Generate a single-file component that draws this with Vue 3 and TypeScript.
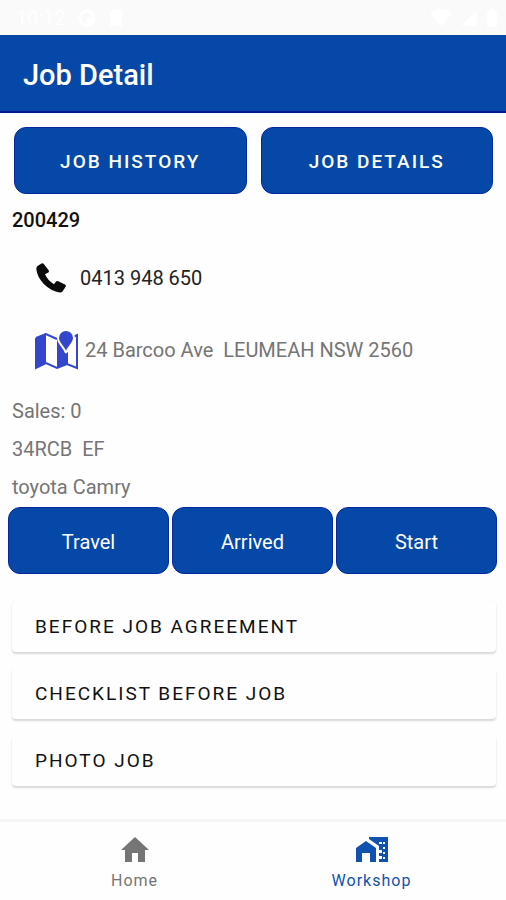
<script setup lang="ts">
import { ref } from 'vue'

interface Tab {
  id: string
  label: string
}

const topActions: string[] = ['JOB HISTORY', 'JOB DETAILS']
const stages: string[] = ['Travel', 'Arrived', 'Start']
const sections: string[] = ['BEFORE JOB AGREEMENT', 'CHECKLIST BEFORE JOB', 'PHOTO JOB']
const details: string[] = ['Sales: 0', '34RCB  EF', 'toyota Camry']
const tabs: Tab[] = [
  { id: 'home', label: 'Home' },
  { id: 'workshop', label: 'Workshop' },
]
const activeTab = ref('workshop')
</script>

<template>
  <div class="screen">
    <div class="status">
      <div class="status-group">
        <span>10:12</span>
        <svg width="18" height="18" viewBox="0 0 18 18" aria-hidden="true"><circle cx="9" cy="9" r="7" fill="none" stroke="#fff" stroke-width="3" /><path d="M9 9h7v6H9z" fill="#fff" /></svg>
        <svg width="16" height="18" viewBox="0 0 16 18" aria-hidden="true"><path d="M5 1h9v16H2V5z" fill="#fff" /></svg>
      </div>
      <div class="status-group status-right">
        <svg width="22" height="18" viewBox="0 0 22 18" aria-hidden="true"><path d="M0 4Q11-4 22 4L11 17z" fill="#fff" /></svg>
        <svg width="18" height="18" viewBox="0 0 18 18" aria-hidden="true"><path d="M17 1v16H1z" fill="#fff" /></svg>
        <svg width="12" height="18" viewBox="0 0 12 18" aria-hidden="true"><path d="M4 0h4v2h3v16H1V2h3z" fill="#fff" /></svg>
      </div>
    </div>
    <header class="app-bar"><h1>Job Detail</h1></header>

    <main class="content">
      <div class="top-actions">
        <button v-for="action in topActions" :key="action" type="button" class="filled spaced">{{ action }}</button>
      </div>

      <h2 class="job-number">200429</h2>
      <a class="contact phone" href="tel:0413948650">
        <svg class="phone-icon" viewBox="0 0 30 30" aria-hidden="true">
          <path d="M1.500 3 5.500.500Q7-.4 8 1.200L12.600 7.200Q13.500 8.600 12.300 9.500L9 11.200Q11.500 17 18 21.300L20 18.500Q21 17.500 22.300 18.200L29 21.600Q30.400 22.500 29.600 23.800L26.500 28.500Q25.500 29.800 23.800 29.500 15.500 28.500 7.800 21 1.200 14 .4 6.500.1 4.200 1.500 3z" />
        </svg>
        <span>0413 948 650</span>
      </a>
      <a class="contact address" href="#map">
        <svg class="map-icon" viewBox="0 0 44 40" aria-hidden="true">
          <path class="map-fill" d="M1 8 11 3v30L1 38zM22 8l10 4v22l-10 4z" />
          <path class="map-line" d="M1 8 11 4l11 5M38 7l4-2v29M1 8v30l10-5 11 5 10-4 10 4V5M32 22v12" />
          <path class="pin" d="M31 23C29.500 17 23 14 23 8a8 8 0 0 1 16 0C39 14 32.500 17 31 23z" />
        </svg>
        <span>24 Barcoo Ave&nbsp; LEUMEAH NSW 2560</span>
      </a>
      <p v-for="line in details" :key="line" class="detail">{{ line }}</p>

      <div class="stages">
        <button v-for="stage in stages" :key="stage" type="button" class="filled">{{ stage }}</button>
      </div>

      <div class="sections">
        <button v-for="section in sections" :key="section" type="button" class="section">{{ section }}</button>
      </div>
    </main>

    <nav class="tabs">
      <button
        v-for="tab in tabs"
        :key="tab.id"
        type="button"
        class="tab"
        :class="{ active: tab.id === activeTab }"
        @click="activeTab = tab.id"
      >
        <svg v-if="tab.id === 'home'" class="tab-icon" viewBox="0 0 34 34" aria-hidden="true">
          <path d="M14 29v-9h6v9h7V17h4L17 4 3 17h4v12z" />
        </svg>
        <svg v-else class="tab-icon" viewBox="0 0 34 34" aria-hidden="true">
          <path d="M1 15 11 8l10 7v14h-6v-9H7v9H1z" />
          <path d="M14 4h19v25h-9v-3h3v-3h-3v-3h3v-3h-3v-4L14 6z" />
          <path class="windows" d="M24 9h3v2h-3zM28 9h2v2h-2zM28 14h2v2h-2zM28 19h2v2h-2zM28 24h2v2h-2z" />
        </svg>
        <span>{{ tab.label }}</span>
      </button>
    </nav>
  </div>
</template>

<style>
body {
  margin: 0;
  background: #fefefe;
}
</style>

<style scoped>
.screen {
  display: flex;
  flex-direction: column;
  min-height: 100vh;
  font-family: Roboto, 'Liberation Sans', sans-serif;
  font-size: 20px;
  line-height: 24px;
  color: #757575;
}

button {
  margin: 0;
  border: 0;
  font: inherit;
  cursor: pointer;
}

.status {
  display: flex;
  justify-content: space-between;
  align-items: center;
  height: 35px;
  padding: 0 8px 0 16px;
  background: #fafafa;
  color: #fff;
}

.status-group {
  display: flex;
  align-items: center;
  gap: 12px;
}

.status-right {
  gap: 8px;
}

.app-bar {
  display: flex;
  align-items: center;
  height: 72px;
  padding: 4px 23px 0;
  border-bottom: 2px solid #001b94;
  background: #0648a8;
  color: #fff;
}

h1 {
  margin: 0;
  font-size: 29px;
  line-height: 36px;
  font-weight: 500;
}

.content {
  flex: 1;
  padding: 14px 10px 20px 12px;
}

.top-actions {
  display: flex;
  gap: 14px;
  padding: 0 3px 0 2px;
}

.filled {
  flex: 1;
  height: 67px;
  padding: 2px 0 0;
  border: 1px solid #0528a0;
  border-radius: 12px;
  background: #0648a8;
  color: #fff;
}

.spaced {
  font-size: 19px;
  font-weight: 500;
  letter-spacing: 2px;
}

.job-number {
  margin: 14px 0 0;
  font-size: 20px;
  line-height: 24px;
  font-weight: 500;
  color: #111;
}

.contact {
  display: flex;
  align-items: center;
  padding-left: 24px;
  color: inherit;
  text-decoration: none;
}

.phone {
  margin-top: 31px;
  gap: 14px;
  color: #222;
}

.phone-icon {
  width: 30px;
  height: 30px;
  fill: #0a0a0a;
}

.address {
  margin: 37px 0 29px;
  gap: 6px;
  padding-left: 23px;
}

.map-icon {
  width: 44px;
  height: 40px;
}

.map-fill {
  fill: #3447cc;
}

.map-line {
  fill: none;
  stroke: #3447cc;
  stroke-width: 2;
}

.pin {
  fill: #3447cc;
  stroke: #fefefe;
  stroke-width: 2;
}

.detail {
  margin: 0 0 14px;
  white-space: pre;
}

.stages {
  display: flex;
  gap: 3px;
  margin: -6px -1px 0 -4px;
}

.sections {
  display: flex;
  flex-direction: column;
  gap: 16px;
  margin-top: 27px;
}

.section {
  height: 51px;
  padding: 0 23px;
  border-radius: 4px;
  background: #fefefe;
  box-shadow: 0 2px 2px #d8d8d8, 0 0 1px #eee;
  color: #111;
  font-size: 19px;
  text-align: left;
  letter-spacing: 2px;
}

.tabs {
  display: flex;
  height: 78px;
  padding: 0 16px;
  border-top: 3px solid #f6f6f6;
  background: #fefefe;
}

.tab {
  flex: 1;
  display: flex;
  flex-direction: column;
  align-items: center;
  padding: 11px 0 0;
  background: none;
  color: #757575;
  font-size: 16px;
  line-height: 20px;
  letter-spacing: 1px;
}

.tab.active {
  color: #0f52b0;
}

.tab-icon {
  width: 34px;
  height: 34px;
  margin-bottom: 4px;
  fill: currentColor;
}

.windows {
  fill: #fefefe;
}
</style>
